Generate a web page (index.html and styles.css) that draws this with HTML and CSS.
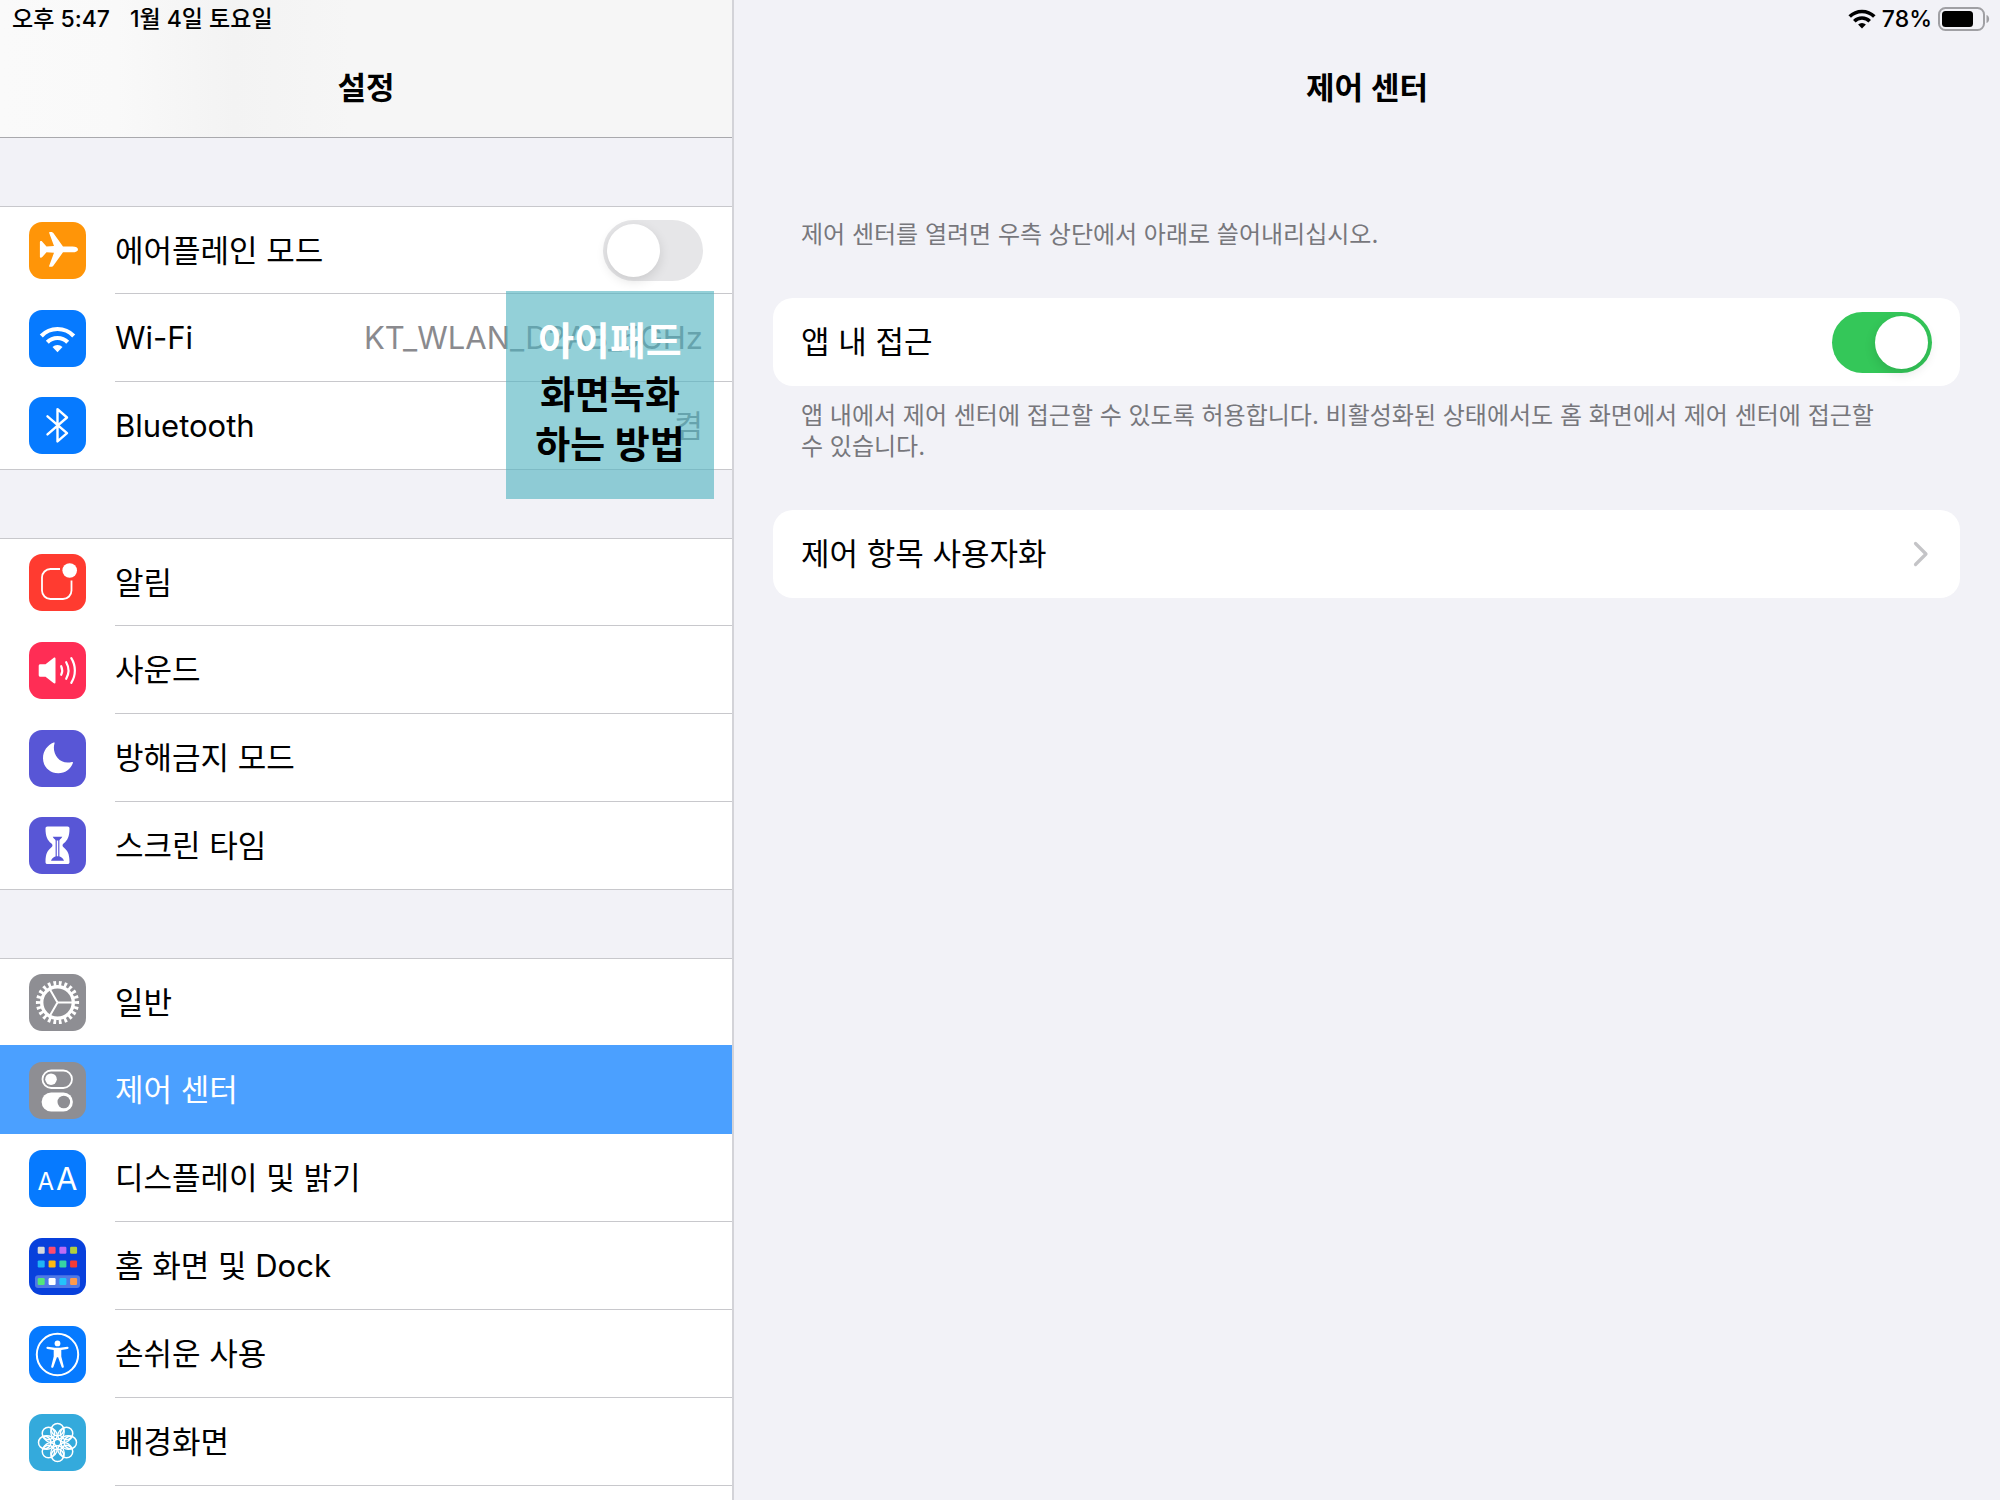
FILE: index.html
```html
<!DOCTYPE html>
<html lang="ko">
<head>
<meta charset="utf-8">
<meta name="viewport" content="width=device-width, initial-scale=1">
<title>설정</title>
<link rel="stylesheet" href="styles.css">
</head>
<body>
<div class="app">
  <aside class="sidebar">
    <header class="bar bar-side">
      <div class="status">
        <span>오후 5:47</span>
        <span>1월 4일 토요일</span>
      </div>
      <h1 class="title">설정</h1>
    </header>

    <nav class="menu">
      <ul class="group">
        <li class="row">
          <span class="icon orange">
            <svg viewBox="0 0 57 57" aria-hidden="true"><path fill="#fff" d="M49 27.400c0 1.700-2.200 2.900-5.500 2.900H34L24.700 43.300c-.7 1-1.500 1.500-2.600 1.500h-1.300c-.6 0-.8-.5-.6-1L25 30.700l-7.500-.5-4.200 4.900c-.4.500-.9.600-1.500.6-.6 0-.9-.3-.9-.8V19.900c0-.5.3-.8.9-.8.6 0 1.100.1 1.500.6l4.200 4.900 7.500-.5-4.800-13.100c-.2-.5 0-1 .6-1h1.300c1.100 0 1.900.5 2.600 1.500L34 24.500h9.500c3.300 0 5.500 1.200 5.500 2.900z"/></svg>
          </span>
          <div class="cell">
            <label class="name" for="airplane">에어플레인 모드</label>
            <input class="switch" type="checkbox" role="switch" id="airplane">
          </div>
        </li>
        <li>
          <a class="row" href="#wifi">
            <span class="icon blue">
              <svg viewBox="0 0 57 57" aria-hidden="true"><g fill="none" stroke="#fff" stroke-width="4.200"><path d="M12.300 26a22.300 22.300 0 0 1 32.400 0"/><path d="M18.300 32.300a14.200 14.200 0 0 1 20.400 0"/></g><path fill="#fff" d="M28.500 42.300l-5-5.200a7.200 7.200 0 0 1 10 0z"/></svg>
            </span>
            <span class="cell"><span class="name">Wi-Fi</span><span class="value">KT_WLAN_D2AB_5GHz</span></span>
          </a>
        </li>
        <li>
          <a class="row" href="#bluetooth">
            <span class="icon blue">
              <svg viewBox="0 0 57 57" aria-hidden="true"><path fill="none" stroke="#fff" stroke-width="2.400" stroke-linejoin="round" stroke-linecap="round" d="M18.500 19.300L38 36.200l-9.500 8.200V12.200L38 20.500 18.500 37.400"/></svg>
            </span>
            <span class="cell"><span class="name">Bluetooth</span><span class="value">켬</span></span>
          </a>
        </li>
      </ul>

      <ul class="group">
        <li>
          <a class="row" href="#notifications">
            <span class="icon red">
              <svg viewBox="0 0 57 57" aria-hidden="true"><path fill="none" stroke="#fff" stroke-width="1.800" d="M31 15h-9.500a8.500 8.500 0 0 0-8.500 8.500v13a8.500 8.500 0 0 0 8.500 8.500h12.500a8.500 8.500 0 0 0 8.500-8.500v-10"/><circle cx="40.700" cy="16.500" r="7.300" fill="#fff"/></svg>
            </span>
            <span class="cell"><span class="name">알림</span></span>
          </a>
        </li>
        <li>
          <a class="row" href="#sounds">
            <span class="icon pink">
              <svg viewBox="0 0 57 57" aria-hidden="true"><path fill="#fff" d="M11.500 22.300h5l8-6.300c1-.8 2-.5 2 .8v23.400c0 1.300-1 1.600-2 .8l-8-6.300h-5c-1.200 0-1.800-.6-1.800-1.800v-8.800c0-1.200.6-1.800 1.800-1.800z"/><g fill="none" stroke="#fff" stroke-width="2.200" stroke-linecap="round"><path d="M32.200 24.200a10 10 0 0 1 0 8.600"/><path d="M37.200 20.200a17 17 0 0 1 0 16.600"/><path d="M42.300 16.200a23 23 0 0 1 0 24.600"/></g></svg>
            </span>
            <span class="cell"><span class="name">사운드</span></span>
          </a>
        </li>
        <li>
          <a class="row" href="#dnd">
            <span class="icon purple">
              <svg viewBox="0 0 57 57" aria-hidden="true"><path fill="#fff" d="M25.600 13C22.300 23.500 30.500 35.500 43 32c.8-.2 1.200.2.900 1C41.600 39.300 36 43.300 29.300 43.300 20.600 43.300 14 36.700 14 28.200c0-7 4.500-13.200 10.700-15.600.7-.3 1.100 0 .9.400z"/></svg>
            </span>
            <span class="cell"><span class="name">방해금지 모드</span></span>
          </a>
        </li>
        <li>
          <a class="row" href="#screentime">
            <span class="icon purple">
              <svg viewBox="0 0 57 57" aria-hidden="true"><path fill="#fff" d="M18.500 9.500h20c1.300 0 2 .8 2 2 0 8-2 11.800-5.700 14.800-1.700 1.400-1.700 2.900 0 4.300 3.700 3 5.700 6.400 5.700 14.300 0 1.300-.7 2.100-2 2.100h-20c-1.300 0-2-.8-2-2.100 0-7.900 2-11.300 5.700-14.300 1.700-1.400 1.700-2.900 0-4.300-3.700-3-5.700-6.800-5.700-14.800 0-1.200.7-2 2-2z"/><path fill="none" stroke="#5856d6" stroke-width="1.200" d="M27.200 22v18M29.800 22v18"/><path fill="#5856d6" d="M23.700 19.800h9.600c-.6 1.600-2.200 2.300-3.300 3.700h-3c-1.100-1.400-2.700-2.100-3.300-3.700zM22 43.700c.8-2.900 3-3.900 5.300-4.500h2.400c2.300.6 4.500 1.600 5.300 4.500z"/></svg>
            </span>
            <span class="cell"><span class="name">스크린 타임</span></span>
          </a>
        </li>
      </ul>

      <ul class="group group-last">
        <li>
          <a class="row" href="#general">
            <span class="icon gray">
              <svg viewBox="0 0 57 57" aria-hidden="true"><g fill="none" stroke="#fff"><circle cx="28.500" cy="28.500" r="15.800" stroke-width="3.400"/><circle cx="28.500" cy="28.500" r="19.200" stroke-width="4.800" pathLength="22" stroke-dasharray=".5 .5" stroke-dashoffset=".25"/><path stroke-width="2" d="M28.500 28.500h15M28.500 28.500l-7.500-13M28.500 28.500l-7.500 13"/></g></svg>
            </span>
            <span class="cell"><span class="name">일반</span></span>
          </a>
        </li>
        <li class="current">
          <a class="row" href="#control" aria-current="page">
            <span class="icon gray">
              <svg viewBox="0 0 57 57" aria-hidden="true"><rect x="13.500" y="8.500" width="29.500" height="17.500" rx="8.700" fill="none" stroke="#fff" stroke-width="1.800"/><circle cx="22" cy="17.200" r="5.800" fill="#fff"/><rect x="12.600" y="30.500" width="31.300" height="19" rx="9.500" fill="#fff"/><circle cx="34.800" cy="40" r="6.300" fill="#8e8e93"/></svg>
            </span>
            <span class="cell"><span class="name">제어 센터</span></span>
          </a>
        </li>
        <li>
          <a class="row" href="#display">
            <span class="icon blue letters"><span class="small-a">A</span><span class="big-a">A</span></span>
            <span class="cell"><span class="name">디스플레이 및 밝기</span></span>
          </a>
        </li>
        <li>
          <a class="row" href="#home">
            <span class="icon navy">
              <svg viewBox="0 0 57 57" aria-hidden="true"><rect x="6" y="37.300" width="45" height="12.600" rx="3" fill="#4f79e6"/><rect x="8.700" y="8.800" width="7" height="7" rx="1.200" fill="#d5d9de"/><rect x="19.600" y="8.800" width="7" height="7" rx="1.200" fill="#ff4b6e"/><rect x="30.400" y="8.800" width="7" height="7" rx="1.200" fill="#bf6cf5"/><rect x="41.100" y="8.800" width="7" height="7" rx="1.200" fill="#b1cf3e"/><rect x="8.700" y="22.400" width="7" height="7" rx="1.200" fill="#1fb5f5"/><rect x="19.600" y="22.400" width="7" height="7" rx="1.200" fill="#fcb913"/><rect x="30.400" y="22.400" width="7" height="7" rx="1.200" fill="#36d6a4"/><rect x="41.100" y="22.400" width="7" height="7" rx="1.200" fill="#f43b35"/><rect x="8.700" y="40" width="7" height="7" rx="1.200" fill="#52e67a"/><rect x="19.600" y="40" width="7" height="7" rx="1.200" fill="#fff"/><rect x="30.400" y="40" width="7" height="7" rx="1.200" fill="#23c3fb"/><rect x="41.100" y="40" width="7" height="7" rx="1.200" fill="#ff9a4a"/></svg>
            </span>
            <span class="cell"><span class="name">홈 화면 및 Dock</span></span>
          </a>
        </li>
        <li>
          <a class="row" href="#accessibility">
            <span class="icon blue">
              <svg viewBox="0 0 57 57" aria-hidden="true"><circle cx="28.500" cy="28.500" r="20.700" fill="none" stroke="#fff" stroke-width="2"/><circle cx="28.500" cy="17.400" r="2.900" fill="#fff"/><path fill="#fff" d="M18.600 20.700l7.400 1h5l7.400-1c1.400-.1 1.700 1.900.2 2.200l-6.300 1.200v6.300l2.500 10c.3 1.500-1.700 2-2.200.6l-3.500-9.700h-1.200L24.400 41c-.5 1.400-2.500.9-2.200-.6l2.500-10v-6.300l-6.300-1.200c-1.500-.3-1.200-2.300.2-2.200z"/></svg>
            </span>
            <span class="cell"><span class="name">손쉬운 사용</span></span>
          </a>
        </li>
        <li>
          <a class="row" href="#wallpaper">
            <span class="icon sky">
              <svg viewBox="0 0 57 57" aria-hidden="true"><defs><g id="petal"><circle cx="28.500" cy="15.700" r="6.200"/><path d="M28.500 25c-4-3.500-4-7 0-12.500 4 5.500 4 9 0 12.500z" transform="rotate(22.500 28.500 28.500)"/></g></defs><g fill="none" stroke="#fff" stroke-width="1.500"><circle cx="28.500" cy="28.500" r="3.300"/><use href="#petal"/><use href="#petal" transform="rotate(45 28.500 28.500)"/><use href="#petal" transform="rotate(90 28.500 28.500)"/><use href="#petal" transform="rotate(135 28.500 28.500)"/><use href="#petal" transform="rotate(180 28.500 28.500)"/><use href="#petal" transform="rotate(225 28.500 28.500)"/><use href="#petal" transform="rotate(270 28.500 28.500)"/><use href="#petal" transform="rotate(315 28.500 28.500)"/></g></svg>
            </span>
            <span class="cell"><span class="name">배경화면</span></span>
          </a>
        </li>
      </ul>
    </nav>

    <div class="badge">
      <strong class="badge-lead">아이패드</strong>
      <span>화면녹화</span>
      <span>하는 방법</span>
    </div>
  </aside>

  <main class="detail">
    <header class="bar">
      <div class="status status-end">
        <svg class="signal" viewBox="0 0 28 20" aria-hidden="true"><g fill="none" stroke="#000" stroke-width="3.600"><path d="M1.700 7.500a17.500 17.500 0 0 1 24.600 0"/><path d="M6.300 12.200a11 11 0 0 1 15.400 0"/></g><path d="M14 19.600l-3.900-4a5.600 5.600 0 0 1 7.800 0z"/></svg>
        <span>78%</span>
        <svg class="battery" viewBox="0 0 52 24" aria-hidden="true"><rect x="1" y="1" width="45" height="22" rx="6.500" fill="none" stroke="#a0a0a4" stroke-width="2"/><rect x="4" y="4" width="31" height="16" rx="3.500"/><path fill="#a0a0a4" d="M48.500 8c3.500 1 3.500 7 0 8z"/></svg>
      </div>
      <h2 class="title">제어 센터</h2>
    </header>

    <div class="content">
      <p class="note">제어 센터를 열려면 우측 상단에서 아래로 쓸어내리십시오.</p>
      <div class="card">
        <label for="inapp">앱 내 접근</label>
        <input class="switch" type="checkbox" role="switch" id="inapp" checked>
      </div>
      <p class="note note-after">앱 내에서 제어 센터에 접근할 수 있도록 허용합니다. 비활성화된 상태에서도 홈 화면에서 제어 센터에 접근할 수 있습니다.</p>
      <a class="card" href="#customize">
        <span>제어 항목 사용자화</span>
        <svg class="chevron" viewBox="0 0 16 26" aria-hidden="true"><path fill="none" stroke="#c4c4c7" stroke-width="3.200" stroke-linecap="round" stroke-linejoin="round" d="M2.500 2.500L13 13 2.500 23.500"/></svg>
      </a>
    </div>
  </main>
</div>
</body>
</html>
```

FILE: styles.css
```css
* {
  box-sizing: border-box;
}

body {
  margin: 0;
  background: #f2f2f7;
  color: #000;
  font-family: Inter, "Noto Sans CJK KR", sans-serif;
  font-size: 31px;
  line-height: 40px;
}

h1,
h2,
p,
ul {
  margin: 0;
  padding: 0;
}

ul {
  list-style: none;
}

a {
  color: inherit;
  text-decoration: none;
}

svg {
  display: block;
}

.app {
  display: flex;
  min-height: 100vh;
}

.sidebar {
  position: relative;
  display: flex;
  flex-direction: column;
  flex: 0 0 36.7%;
  border-right: 2px solid #d3d3d8;
}

.detail {
  flex: 1;
  min-width: 0;
}

/* Top bars */
.bar {
  height: 138px;
}

.bar-side {
  border-bottom: 1px solid #a9a9ad;
  background: linear-gradient(90deg, #fafafa 0, #f9f9f9 16%, #f3f3f3 32%, #f6f6f6 48%, #f6f6f6 100%);
}

.status {
  display: flex;
  align-items: center;
  gap: 20px;
  height: 38px;
  padding: 0 12px;
  font-size: 23px;
  font-weight: 500;
}

.status-end {
  justify-content: flex-end;
  gap: 6px;
  padding: 0 10px;
}

.signal {
  width: 28px;
  height: 20px;
}

.battery {
  width: 52px;
  height: 24px;
}

.title {
  padding-top: 30px;
  font-size: 31px;
  font-weight: 600;
  text-align: center;
}

/* Sidebar list */
.menu {
  display: flex;
  flex: 1;
  flex-direction: column;
  gap: 68px;
  padding-top: 68px;
}

.group {
  border: solid #c8c8cc;
  border-width: 1px 0;
  background: #fff;
}

.group-last {
  flex: 1;
  border-bottom: 0;
}

.row {
  display: flex;
  align-items: center;
  gap: 29px;
  height: 88px;
  padding-left: 29px;
}

.group > :first-child,
.group > :first-child .row {
  height: 87px;
}

.cell {
  display: flex;
  flex: 1;
  align-items: center;
  justify-content: space-between;
  height: 100%;
  padding-right: 29px;
  border-bottom: 1px solid #c8c8cc;
}

.group:not(.group-last) > :last-child .row {
  height: 87px;
}

.group:not(.group-last) > :last-child .cell {
  border-bottom: 0;
}

.name,
.value {
  padding-top: 1px;
}

.value {
  color: #8a8a8e;
}

.current {
  position: relative;
  margin-top: -1px;
  padding-top: 1px;
  background: #4ba0ff;
  color: #fff;
}

.current .cell {
  border-color: #4ba0ff;
}

.icon {
  flex: none;
  width: 57px;
  height: 57px;
  overflow: hidden;
  border-radius: 13px;
  color: #fff;
}

.orange { background: #ff9508; }
.blue { background: #067aff; }
.red { background: #ff3b30; }
.pink { background: #ff2d55; }
.purple { background: #5856d6; }
.gray { background: #8e8e93; }
.navy { background: #0840dc; }
.sky { background: #34aadc; }

.letters {
  display: flex;
  align-items: baseline;
  justify-content: center;
  gap: 2px;
  padding-top: 9px;
}

.small-a {
  font-size: 24px;
}

.big-a {
  font-size: 31px;
}

/* Switch */
.switch {
  flex: none;
  width: 100px;
  height: 61px;
  margin: 0;
  padding: 4px;
  border-radius: 31px;
  background: #e6e6e8;
  appearance: none;
}

.switch::before {
  content: "";
  display: block;
  width: 53px;
  height: 53px;
  border-radius: 50%;
  background: #fff;
  box-shadow: 0 4px 12px rgba(0, 0, 0, 0.12);
}

.switch:checked {
  background: #34c759;
}

.switch:checked::before {
  margin-left: auto;
}

/* Overlay badge */
.badge {
  position: absolute;
  top: 291px;
  right: 18px;
  display: flex;
  flex-direction: column;
  align-items: center;
  width: 208px;
  height: 208px;
  padding-top: 25px;
  background: rgba(81, 179, 192, 0.62);
  font-size: 38px;
  font-weight: 600;
  line-height: 50px;
}

.badge-lead {
  margin-bottom: 3px;
  color: #fff;
  font-size: 39px;
  font-weight: 600;
}

/* Detail pane */
.content {
  padding: 81px 40px 80px 39px;
}

.note {
  padding: 0 80px 0 28px;
  color: #77777c;
  font-size: 24px;
  line-height: 31px;
  word-break: keep-all;
}

.note-after {
  padding-top: 14px;
}

.card {
  display: flex;
  align-items: center;
  justify-content: space-between;
  height: 88px;
  margin-top: 48px;
  padding: 0 28px;
  border-radius: 20px;
  background: #fff;
}

.chevron {
  width: 16px;
  height: 26px;
  margin-right: 3px;
}
```
